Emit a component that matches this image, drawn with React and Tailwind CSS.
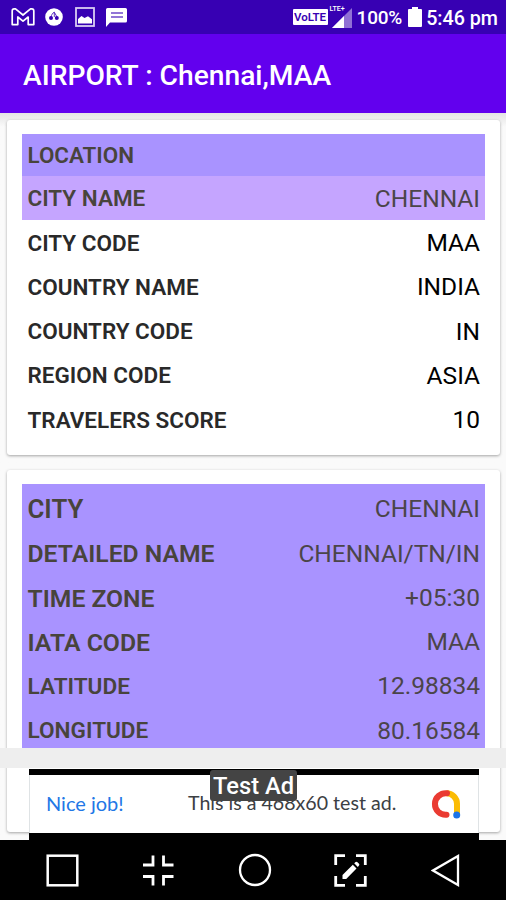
import React from "react";
import clsx from "clsx";

const LOCATION_ROWS = [
  { label: "CITY NAME", value: "CHENNAI", active: true },
  { label: "CITY CODE", value: "MAA" },
  { label: "COUNTRY NAME", value: "INDIA" },
  { label: "COUNTRY CODE", value: "IN" },
  { label: "REGION CODE", value: "ASIA" },
  { label: "TRAVELERS SCORE", value: "10" },
];

const CITY_ROWS = [
  { label: "CITY", value: "CHENNAI", size: "text-[25.8px]" },
  { label: "DETAILED NAME", value: "CHENNAI/TN/IN", size: "text-[24.7px]" },
  { label: "TIME ZONE", value: "+05:30", size: "text-[24.7px]" },
  { label: "IATA CODE", value: "MAA", size: "text-[24.8px]" },
  { label: "LATITUDE", value: "12.98834", size: "text-[22.6px]" },
  { label: "LONGITUDE", value: "80.16584", size: "text-[22.6px]" },
];

function StatusBar() {
  return (
    <div className="flex h-[34px] shrink-0 items-center justify-between bg-[#3700b3] pr-[8px] pl-[11px] text-white">
      <div className="flex items-center">
        <svg className="h-[18px] w-[24px]" viewBox="0 0 24 18" fill="none" stroke="#fff" strokeWidth="1.7" strokeLinejoin="round">
          <path d="M1.2 3Q1.2.9 3.2.9H4.5L12 7 19.5.9H20.8Q22.8.9 22.8 3V16.6H17.2V9L12 13.2 6.8 9V16.6H1.2Z" />
        </svg>
        <svg className="ml-[10px] h-[18px] w-[18px]" viewBox="0 0 18 18">
          <circle cx="9" cy="9" r="8.8" fill="#fff" />
          <path d="M9.2 4C7.6 5.2 6.4 7 6 9M9.3 4v5M9.5 4.5 12 9" fill="none" stroke="#3700b3" strokeWidth="0.8" />
          <circle cx="6" cy="10" r="2" fill="#3700b3" />
          <circle cx="11.8" cy="10" r="2" fill="#3700b3" />
        </svg>
        <svg className="ml-[12px] h-[20px] w-[20px]" viewBox="0 0 20 20">
          <rect x="1" y="1" width="18" height="18" fill="none" stroke="#d9ccf2" strokeWidth="1.8" />
          <path d="M3 16.5V12l3.5-3 3 2 3.5-1.7 4 3v4.2Z" fill="#fff" />
        </svg>
        <svg className="ml-[11px] h-[19px] w-[21px]" viewBox="0 0 21 19">
          <path d="M0 1.5Q0 0 1.5 0H19.5Q21 0 21 1.5V13Q21 14.5 19.5 14.5H4L0 19Z" fill="#fff" />
          <path d="M5 5H17M5 9H17" stroke="#6f49c9" strokeWidth="1.5" />
        </svg>
      </div>
      <div className="flex items-center">
        <span className="flex h-[16px] w-[35px] items-center justify-center rounded-[1px] bg-white pt-px text-[11.5px] font-semibold text-[#3700b3]">
          VoLTE
        </span>
        <div className="ml-[2px] flex h-[23px] w-[24px] flex-col">
          <span className="h-[7px] text-[7px] leading-[8px] font-medium">LTE+</span>
          <svg className="-mt-[4px] ml-[2px] h-[20px] w-[20px] shrink-0" viewBox="0 0 20 20">
            <path d="M0 20 20 0V20Z" fill="#9070d5" />
            <path d="M0 20 12 8V20Z" fill="#fff" />
          </svg>
        </div>
        <span className="ml-[3px] pt-[2px] text-[19px] font-medium tracking-[-0.2px]">100%</span>
        <svg className="ml-[6px] h-[20px] w-[14px]" viewBox="0 0 14 20">
          <path d="M4 0h6v2h3q1 0 1 1v16q0 1-1 1H1q-1 0-1-1V3q0-1 1-1h3Z" fill="#fff" />
        </svg>
        <span className="ml-[4px] pt-[3px] text-[19.7px] font-medium">5:46 pm</span>
      </div>
    </div>
  );
}

function Row({ label, value, size = "text-[22.5px]", active, muted }) {
  return (
    <div
      className={clsx(
        "flex h-[44.3px] items-center justify-between pt-[3px] pr-[5px] pl-[5.5px]",
        active && "bg-[#c5a5ff]",
        active || muted ? "text-[#4b4549]" : "text-black"
      )}
    >
      <span className={clsx("font-semibold", size, active || muted ? "text-[#48443c]" : "text-[#292929]")}>
        {label}
      </span>
      <span className="text-[24.5px]">{value}</span>
    </div>
  );
}

function AdBanner() {
  return (
    <div className="absolute inset-x-0 top-[635px]">
      <div className="h-[20px] bg-[#eeeeee]" />
      <div className="mt-px mr-[27px] ml-[29px] h-[71px] bg-black pt-[6px]">
        <div className="relative flex h-[58px] items-center border-x border-[#dfe3e5] bg-white pb-[2px] pl-[16px] font-[Lato,sans-serif]">
          <span className="w-[142px] text-[20px] text-[#2277e6]">Nice job!</span>
          <span className="text-[19.6px] text-[#3c4043]">This is a 468x60 test ad.</span>
          <svg className="absolute top-[14px] left-[401px] h-[30px] w-[30px]" viewBox="0 0 30 30" fill="none" strokeWidth="6">
            <path d="M15.5 4.3A10.5 10.5 0 0 1 26 14.8V25" stroke="#fbbc04" />
            <path d="M16 4.3A10.8 10.8 0 1 0 15.5 25.8" stroke="#ea3b32" strokeLinecap="round" />
            <circle cx="25.7" cy="26" r="3.5" fill="#1a73e8" />
          </svg>
          <span className="absolute top-[-5px] left-[180px] flex h-[31px] w-[87px] items-center justify-center rounded-[3px] bg-[#444444] pt-[2px] font-[Roboto,sans-serif] text-[23.7px] font-medium whitespace-nowrap text-white">
            Test Ad
          </span>
        </div>
      </div>
    </div>
  );
}

function NavBar() {
  return (
    <nav className="flex h-[60px] shrink-0 items-center justify-between bg-black pr-[46px] pl-[45.5px]">
      <svg className="h-[33px] w-[33px]" viewBox="0 0 33 33" fill="none" stroke="#fff" strokeWidth="2.5">
        <rect x="1.7" y="1.7" width="29.6" height="29.6" />
      </svg>
      <svg className="h-[33px] w-[32px]" viewBox="0 0 32 33" fill="none" stroke="#fff" strokeWidth="2.8">
        <path d="M11 1.5V11H1M21.5 1.5V11H31.5M11 31.5V22.5H1M21.5 31.5V22.5H31.5" />
      </svg>
      <svg className="h-[34px] w-[34px]" viewBox="0 0 34 34" fill="none" stroke="#fff" strokeWidth="2.3">
        <circle cx="17" cy="17" r="15" />
      </svg>
      <svg className="-ml-[2px] h-[33px] w-[33px]" viewBox="0 0 33 33" fill="none" stroke="#fff" strokeWidth="2.8">
        <path d="M11 1.7H1.7V11M22 1.7H31.3V11M11 31.3H1.7V22M22 31.3H31.3V22" />
        <path d="M8.5 25V21L18.8 10.7 22.5 14.4 12.2 24.9ZM20.2 9.3 21.6 8Q22.5 7.3 23.5 8.2L25 9.7Q25.8 10.7 25 11.6L23.8 12.9Z" fill="#fff" stroke="none" />
      </svg>
      <svg className="h-[33px] w-[29px]" viewBox="0 0 29 33" fill="none" stroke="#fff" strokeWidth="2.3">
        <path d="M27 2V31L2 16.5Z" />
      </svg>
    </nav>
  );
}

export default function App() {
  return (
    <div className="flex h-[900px] w-[506px] flex-col overflow-hidden bg-[#fafafa] font-[Roboto,sans-serif]">
      <StatusBar />
      <header className="flex h-[79px] shrink-0 items-center bg-[#6200ee] pt-[5px] pl-[23px]">
        <h1 className="text-[28.2px] font-medium text-white">AIRPORT : Chennai,MAA</h1>
      </header>
      <main className="relative flex h-[727px] shrink-0 flex-col gap-[15px] bg-linear-to-b from-[#e4e4e4] from-0% to-[#fafafa] to-[14px] px-[7px] pt-[7px]">
        <section className="h-[335px] w-[493px] shrink-0 rounded-[3px] bg-white px-[15px] pt-[14px] shadow-[0_1px_3px_rgba(0,0,0,0.35)]">
          <div className="flex h-[41.5px] items-center bg-[#a993ff] px-[5.5px] pt-[3px]">
            <h2 className="text-[22.4px] font-semibold text-[#48443c]">LOCATION</h2>
          </div>
          {LOCATION_ROWS.map((row) => (
            <Row key={row.label} {...row} />
          ))}
        </section>
        <section className="h-[362px] w-[493px] shrink-0 rounded-[3px] bg-white px-[15px] pt-[14px] shadow-[0_1px_3px_rgba(0,0,0,0.35)]">
          <div className="h-[270px] overflow-hidden bg-[#a993ff] pt-[2px]">
            {CITY_ROWS.map((row) => (
              <Row key={row.label} {...row} muted />
            ))}
          </div>
        </section>
        <AdBanner />
      </main>
      <NavBar />
    </div>
  );
}
